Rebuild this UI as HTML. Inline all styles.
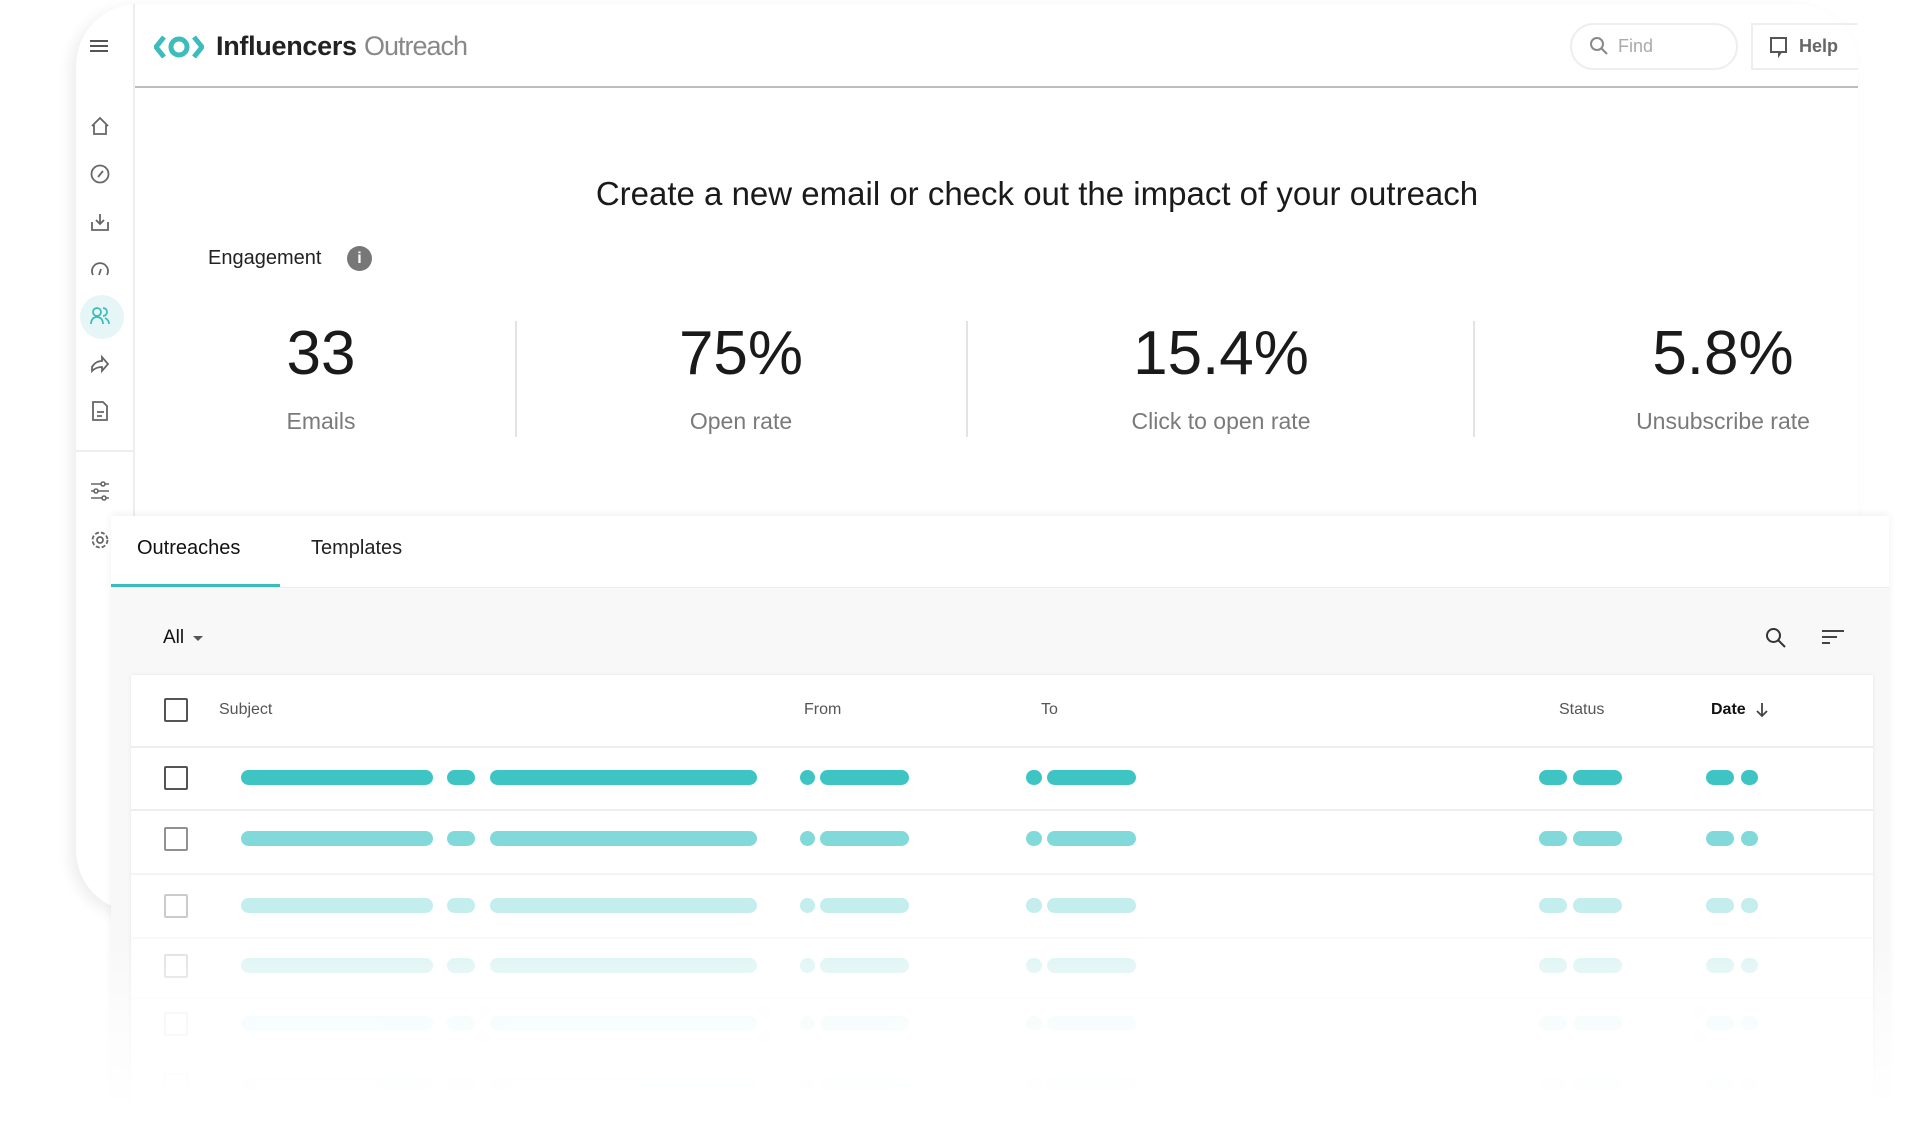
<!DOCTYPE html>
<html><head><meta charset="utf-8"><style>
*{box-sizing:border-box;margin:0;padding:0}
body{width:1920px;height:1132px;background:#fff;position:relative;overflow:hidden;font-family:"Liberation Sans",Arial,sans-serif;color:#222}
.a{position:absolute}
.card{left:76px;top:4px;width:1782px;height:908px;background:#fff;border-radius:62px 62px 0 62px;box-shadow:-6px 4px 14px rgba(0,0,0,.07)}
.side{left:76px;top:4px;width:59px;height:908px;border-right:2px solid #eee}
.hdr{left:135px;top:86px;width:1723px;height:2px;background:#bdbdbd}
.ic{position:absolute;left:89px;width:22px;height:22px}
.stat{position:absolute;width:300px;text-align:center}
.num{font-size:62px;color:#1a1a1a;top:318px;line-height:72px}
.lbl{font-size:23px;color:#7a7a7a;top:408px}
.div{position:absolute;top:321px;width:2px;height:116px;background:#e3e3e3}
.low{left:111px;top:516px;width:1778px;height:616px;background:#f8f8f8;box-shadow:0 -2px 8px rgba(0,0,0,.06)}
.tabs{left:111px;top:516px;width:1778px;height:72px;background:#fff;border-bottom:1px solid #eee}
.tbl{left:131px;top:675px;width:1742px;height:457px;background:#fff;box-shadow:0 0 4px rgba(0,0,0,.08)}
.th{position:absolute;top:701px;font-size:16px;color:#555}
.cb{position:absolute;left:164px;width:24px;height:24px;border:2px solid #555;border-radius:2px}
.row{position:absolute;left:0;width:1920px;height:15px}
.b{position:absolute;top:0;height:15px;border-radius:8px;background:#3fc4c4}
.line{position:absolute;left:131px;width:1742px;height:2px;background:#eee}
.fade{left:0;top:940px;width:1920px;height:192px;background:linear-gradient(rgba(255,255,255,0),rgba(255,255,255,.6) 45%,#fff 90%)}
</style></head><body>
<div class="a card"></div>
<div class="a side"></div>
<div class="a" style="left:76px;top:450px;width:59px;height:2px;background:#eee"></div>
<div class="a hdr"></div>
<svg class="a" style="left:88px;top:37px" width="22" height="18" viewBox="0 0 22 18"><path d="M2 4h18M2 9h18M2 14h18" stroke="#555" stroke-width="2"/></svg>
<svg class="a" style="left:154px;top:33px" width="50" height="28" viewBox="0 0 50 28"><path d="M10 4 2 14l8 10" fill="none" stroke="#3cbcbc" stroke-width="5"/><path d="M40 4l8 10-8 10" fill="none" stroke="#3cbcbc" stroke-width="5"/><circle cx="25" cy="14" r="8" fill="none" stroke="#3cbcbc" stroke-width="5"/></svg>
<div class="a" style="left:216px;top:31px;font-size:27px;font-weight:bold;color:#222;letter-spacing:-.3px">Influencers <span style="font-weight:normal;color:#888;letter-spacing:-1px">Outreach</span></div>
<div class="a" style="left:1570px;top:23px;width:168px;height:47px;border:2px solid #eee;border-radius:24px"></div>
<svg class="a" style="left:1589px;top:36px" width="20" height="20" viewBox="0 0 20 20"><circle cx="8" cy="8" r="6" fill="none" stroke="#888" stroke-width="2"/><path d="M12.5 12.5 18 18" stroke="#888" stroke-width="2"/></svg>
<div class="a" style="left:1618px;top:36px;font-size:18px;color:#aaa">Find</div>
<div class="a" style="left:1751px;top:23px;width:107px;height:47px;border:2px solid #eee;border-right:none"></div>
<svg class="a" style="left:1769px;top:36px" width="20" height="22" viewBox="0 0 20 22"><path d="M2 2h15v14h-5l-2 3v-3H2z" fill="none" stroke="#555" stroke-width="2"/></svg>
<div class="a" style="left:1799px;top:36px;font-size:18px;color:#666;font-weight:bold">Help</div>
<svg class="ic" style="top:115px" viewBox="0 0 22 22"><path d="M3 11 11 3l8 8M5 10v9h12v-9" fill="none" stroke="#666" stroke-width="1.8"/></svg>
<svg class="ic" style="top:163px" viewBox="0 0 22 22"><circle cx="11" cy="11" r="8.5" fill="none" stroke="#666" stroke-width="1.8"/><path d="M14 8 9 14" stroke="#666" stroke-width="1.8"/></svg>
<svg class="ic" style="top:211px" viewBox="0 0 22 22"><path d="M3 11v8h16v-8M11 3v10M7 9l4 4 4-4" fill="none" stroke="#666" stroke-width="1.8"/></svg>
<svg class="ic" style="top:258px" viewBox="0 0 22 22"><path d="M4 17a8 8 0 1 1 14 0M12 11l-2 6" fill="none" stroke="#666" stroke-width="1.8"/></svg>
<div class="a" style="left:80px;top:295px;width:44px;height:44px;border-radius:50%;background:#e6f6f6"></div>
<svg class="ic" style="top:305px" viewBox="0 0 22 22"><circle cx="8" cy="7" r="4" fill="none" stroke="#3cbcbc" stroke-width="1.8"/><path d="M2 19c0-5 3-7 6-7s6 2 6 7M14 3a4 4 0 0 1 0 8M16 13c2 1 4 3 4 6" fill="none" stroke="#3cbcbc" stroke-width="1.8"/></svg>
<svg class="ic" style="top:353px" viewBox="0 0 22 22"><path d="M3 14c3-5 7-6 10-6V4l6 7-6 7v-4c-4 0-7 1-10 4z" fill="none" stroke="#666" stroke-width="1.8"/></svg>
<svg class="ic" style="top:400px" viewBox="0 0 22 22"><path d="M4 2h10l4 4v14H4zM8 12h7M8 16h5" fill="none" stroke="#666" stroke-width="1.8"/></svg>
<svg class="ic" style="top:480px" viewBox="0 0 22 22"><path d="M2 4h18M2 11h18M2 18h18" stroke="#666" stroke-width="1.6"/><circle cx="14" cy="4" r="2" fill="#fff" stroke="#666" stroke-width="1.6"/><circle cx="7" cy="11" r="2" fill="#fff" stroke="#666" stroke-width="1.6"/><circle cx="15" cy="18" r="2" fill="#fff" stroke="#666" stroke-width="1.6"/></svg>
<svg class="ic" style="top:529px" viewBox="0 0 22 22"><circle cx="11" cy="11" r="3" fill="none" stroke="#666" stroke-width="1.8"/><circle cx="11" cy="11" r="7.5" fill="none" stroke="#666" stroke-width="1.8" stroke-dasharray="4 2"/></svg>
<div class="a" style="left:0;width:2074px;top:175px;text-align:center;font-size:33px;color:#1a1a1a">Create a new email or check out the impact of your outreach</div>
<div class="a" style="left:208px;top:247px;font-size:20px;color:#222">Engagement</div>
<div class="a" style="left:347px;top:246px;width:25px;height:25px;border-radius:50%;background:#777;color:#fff;font-size:16px;font-weight:bold;text-align:center;line-height:25px">i</div>
<div class="stat num" style="left:171px">33</div><div class="stat lbl" style="left:171px">Emails</div>
<div class="stat num" style="left:591px">75%</div><div class="stat lbl" style="left:591px">Open rate</div>
<div class="stat num" style="left:1071px">15.4%</div><div class="stat lbl" style="left:1071px">Click to open rate</div>
<div class="stat num" style="left:1573px">5.8%</div><div class="stat lbl" style="left:1573px">Unsubscribe rate</div>
<div class="div" style="left:515px"></div><div class="div" style="left:966px"></div><div class="div" style="left:1473px"></div>
<div class="a low"></div>
<div class="a tabs"></div>
<div class="a" style="left:137px;top:537px;font-size:20px;color:#111">Outreaches</div>
<div class="a" style="left:311px;top:537px;font-size:20px;color:#222">Templates</div>
<div class="a" style="left:111px;top:584px;width:169px;height:3px;background:#3cbcbc"></div>
<div class="a" style="left:163px;top:627px;font-size:19px;color:#111">All</div>
<div class="a" style="left:193px;top:636px;width:0;height:0;border-left:5px solid transparent;border-right:5px solid transparent;border-top:5px solid #555"></div>
<svg class="a" style="left:1764px;top:626px" width="24" height="24" viewBox="0 0 24 24"><circle cx="9.5" cy="9.5" r="6.5" fill="none" stroke="#333" stroke-width="2"/><path d="M14.5 14.5 21 21" stroke="#333" stroke-width="2"/></svg>
<svg class="a" style="left:1820px;top:628px" width="26" height="20" viewBox="0 0 26 20"><path d="M2 3h22M2 9h15M2 15h8" stroke="#444" stroke-width="2"/></svg>
<div class="a tbl"></div>
<div class="cb" style="top:698px"></div>
<div class="th" style="left:219px">Subject</div>
<div class="th" style="left:804px">From</div>
<div class="th" style="left:1041px">To</div>
<div class="th" style="left:1559px">Status</div>
<div class="th" style="left:1711px;color:#111;font-weight:bold">Date</div>
<svg class="a" style="left:1755px;top:701px" width="14" height="18" viewBox="0 0 14 18"><path d="M7 2v13M2 10l5 5 5-5" fill="none" stroke="#444" stroke-width="1.8"/></svg>
<div class="line" style="top:746px"></div>

<div class="cb" style="top:766px"></div>
<div class="row" style="top:770px"><div class="b" style="left:241px;width:192px"></div><div class="b" style="left:447px;width:28px"></div><div class="b" style="left:490px;width:267px"></div><div class="b" style="left:800px;width:15px"></div><div class="b" style="left:820px;width:89px"></div><div class="b" style="left:1026px;width:16px"></div><div class="b" style="left:1047px;width:89px"></div><div class="b" style="left:1539px;width:28px"></div><div class="b" style="left:1573px;width:49px"></div><div class="b" style="left:1706px;width:28px"></div><div class="b" style="left:1741px;width:17px"></div></div>
<div class="line" style="top:809px"></div>

<div style="opacity:.65"><div class="cb" style="top:827px"></div>
<div class="row" style="top:831px"><div class="b" style="left:241px;width:192px"></div><div class="b" style="left:447px;width:28px"></div><div class="b" style="left:490px;width:267px"></div><div class="b" style="left:800px;width:15px"></div><div class="b" style="left:820px;width:89px"></div><div class="b" style="left:1026px;width:16px"></div><div class="b" style="left:1047px;width:89px"></div><div class="b" style="left:1539px;width:28px"></div><div class="b" style="left:1573px;width:49px"></div><div class="b" style="left:1706px;width:28px"></div><div class="b" style="left:1741px;width:17px"></div></div>
<div class="line" style="top:873px"></div></div>

<div style="opacity:.3"><div class="cb" style="top:894px"></div>
<div class="row" style="top:898px"><div class="b" style="left:241px;width:192px"></div><div class="b" style="left:447px;width:28px"></div><div class="b" style="left:490px;width:267px"></div><div class="b" style="left:800px;width:15px"></div><div class="b" style="left:820px;width:89px"></div><div class="b" style="left:1026px;width:16px"></div><div class="b" style="left:1047px;width:89px"></div><div class="b" style="left:1539px;width:28px"></div><div class="b" style="left:1573px;width:49px"></div><div class="b" style="left:1706px;width:28px"></div><div class="b" style="left:1741px;width:17px"></div></div>
<div class="line" style="top:937px"></div></div>

<div style="opacity:.17"><div class="cb" style="top:954px"></div>
<div class="row" style="top:958px"><div class="b" style="left:241px;width:192px"></div><div class="b" style="left:447px;width:28px"></div><div class="b" style="left:490px;width:267px"></div><div class="b" style="left:800px;width:15px"></div><div class="b" style="left:820px;width:89px"></div><div class="b" style="left:1026px;width:16px"></div><div class="b" style="left:1047px;width:89px"></div><div class="b" style="left:1539px;width:28px"></div><div class="b" style="left:1573px;width:49px"></div><div class="b" style="left:1706px;width:28px"></div><div class="b" style="left:1741px;width:17px"></div></div>
<div class="line" style="top:997px"></div></div>

<div style="opacity:.09"><div class="cb" style="top:1012px"></div>
<div class="row" style="top:1016px"><div class="b" style="left:241px;width:192px"></div><div class="b" style="left:447px;width:28px"></div><div class="b" style="left:490px;width:267px"></div><div class="b" style="left:800px;width:15px"></div><div class="b" style="left:820px;width:89px"></div><div class="b" style="left:1026px;width:16px"></div><div class="b" style="left:1047px;width:89px"></div><div class="b" style="left:1539px;width:28px"></div><div class="b" style="left:1573px;width:49px"></div><div class="b" style="left:1706px;width:28px"></div><div class="b" style="left:1741px;width:17px"></div></div></div>

<div style="opacity:.05"><div class="cb" style="top:1073px"></div>
<div class="row" style="top:1077px"><div class="b" style="left:241px;width:192px"></div><div class="b" style="left:447px;width:28px"></div><div class="b" style="left:490px;width:267px"></div><div class="b" style="left:800px;width:15px"></div><div class="b" style="left:820px;width:89px"></div><div class="b" style="left:1026px;width:16px"></div><div class="b" style="left:1047px;width:89px"></div><div class="b" style="left:1539px;width:28px"></div><div class="b" style="left:1573px;width:49px"></div><div class="b" style="left:1706px;width:28px"></div><div class="b" style="left:1741px;width:17px"></div></div></div>

<div class="a fade"></div>
</body></html>
